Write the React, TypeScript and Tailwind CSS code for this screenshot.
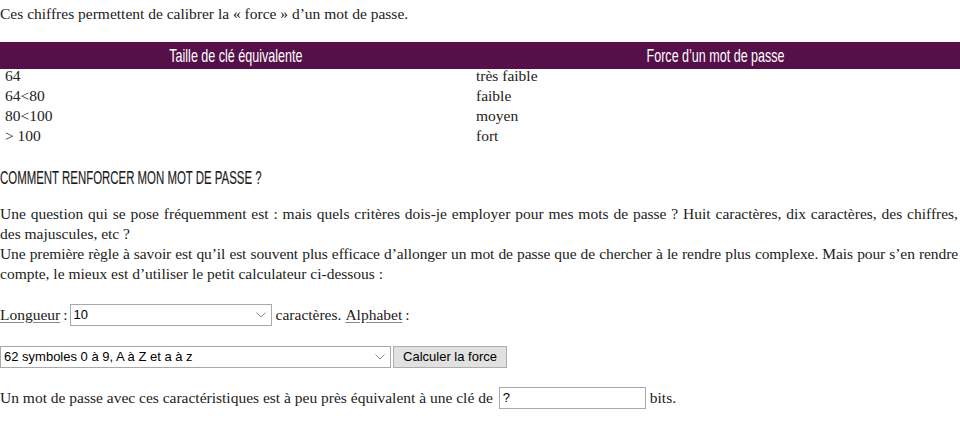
import React from "react";

const rows = [
  ["64", "très faible"],
  ["64<80", "faible"],
  ["80<100", "moyen"],
  ["> 100", "fort"],
];

function Chevron() {
  return (
    <svg width="10" height="6" viewBox="0 0 10 6" className="pointer-events-none absolute right-[6px] top-1/2 -translate-y-1/2">
      <path d="M0.5 0.5 L5 5 L9.5 0.5" fill="none" stroke="#8a8a8a" strokeWidth="1" />
    </svg>
  );
}

function Select({ value, width }: { value: string; width: string }) {
  return (
    <span className={`relative inline-block h-[22px] align-middle ${width}`}>
      <span className="flex h-full items-center border border-[#a9a9a9] bg-white pl-[3px] font-['Liberation_Sans',sans-serif] text-[13px] text-black">
        {value}
      </span>
      <Chevron />
    </span>
  );
}

export default function App() {
  return (
    <div className="h-[424px] w-[960px] overflow-hidden bg-white font-['Liberation_Serif',serif] text-[15.5px] leading-[20px] text-[#222]">
      <p className="pt-[4px]">Ces chiffres permettent de calibrer la « force » d’un mot de passe.</p>

      <div className="mt-[18px] grid h-[27px] grid-cols-[472px_1fr] items-center bg-[#561049] font-['Liberation_Sans',sans-serif] text-[19px] text-white">
        <div className="flex justify-center">
          <span className="inline-block scale-x-[0.66]">Taille de clé équivalente</span>
        </div>
        <div className="flex justify-center">
          <span className="inline-block scale-x-[0.66]">Force d’un mot de passe</span>
        </div>
      </div>
      <div className="-mt-[3px]">
        {rows.map(([a, b]) => (
          <div key={a} className="grid h-[20px] grid-cols-[472px_1fr]">
            <span className="pl-[5px]">{a}</span>
            <span className="pl-[4px]">{b}</span>
          </div>
        ))}
      </div>

      <h2 className="mt-[22px] h-[20px] origin-left scale-x-[0.635] whitespace-nowrap font-['Liberation_Sans',sans-serif] text-[18px] leading-[20px] text-[#1a1a1a] [-webkit-text-stroke:0.15px_#1a1a1a]">
        COMMENT RENFORCER MON MOT DE PASSE ?
      </h2>

      <div className="mt-[16px] w-[958px] whitespace-nowrap">
        <div className="text-justify [text-align-last:justify]">
          Une question qui se pose fréquemment est : mais quels critères dois-je employer pour mes mots de passe ? Huit caractères, dix caractères, des chiffres,
        </div>
        <div>des majuscules, etc ?</div>
        <div className="text-justify tracking-[-0.09px] [text-align-last:justify]">
          Une première règle à savoir est qu’il est souvent plus efficace d’allonger un mot de passe que de chercher à le rendre plus complexe. Mais pour s’en rendre
        </div>
        <div>compte, le mieux est d’utiliser le petit calculateur ci-dessous :</div>
      </div>

      <div className="mt-[20px] flex h-[22px] items-center">
        <span className="underline decoration-[#888] underline-offset-2">Longueur</span>
        <span className="ml-[3px]">:</span>
        <span className="ml-[2px]">
          <Select value="10" width="w-[202px]" />
        </span>
        <span className="ml-[4px]">caractères.</span>
        <span className="ml-[4px] underline decoration-[#888] underline-offset-2">Alphabet</span>
        <span className="ml-[3px]">:</span>
      </div>

      <div className="mt-[20px] flex h-[22px] items-center">
        <Select value="62 symboles 0 à 9, A à Z et a à z" width="w-[391px]" />
        <button className="ml-[2px] h-[22px] w-[114px] border border-[#adadad] bg-[#e1e1e1] font-['Liberation_Sans',sans-serif] text-[13px] text-black">
          Calculer la force
        </button>
      </div>

      <div className="mt-[19px] flex h-[22px] items-center">
        <span>Un mot de passe avec ces caractéristiques est à peu près équivalent à une clé de</span>
        <span className="ml-[6px] flex h-[22px] w-[147px] items-center border border-[#a9a9a9] bg-white pl-[3px] font-['Liberation_Sans',sans-serif] text-[13px] text-black">
          ?
        </span>
        <span className="ml-[4px]">bits.</span>
      </div>
    </div>
  );
}
